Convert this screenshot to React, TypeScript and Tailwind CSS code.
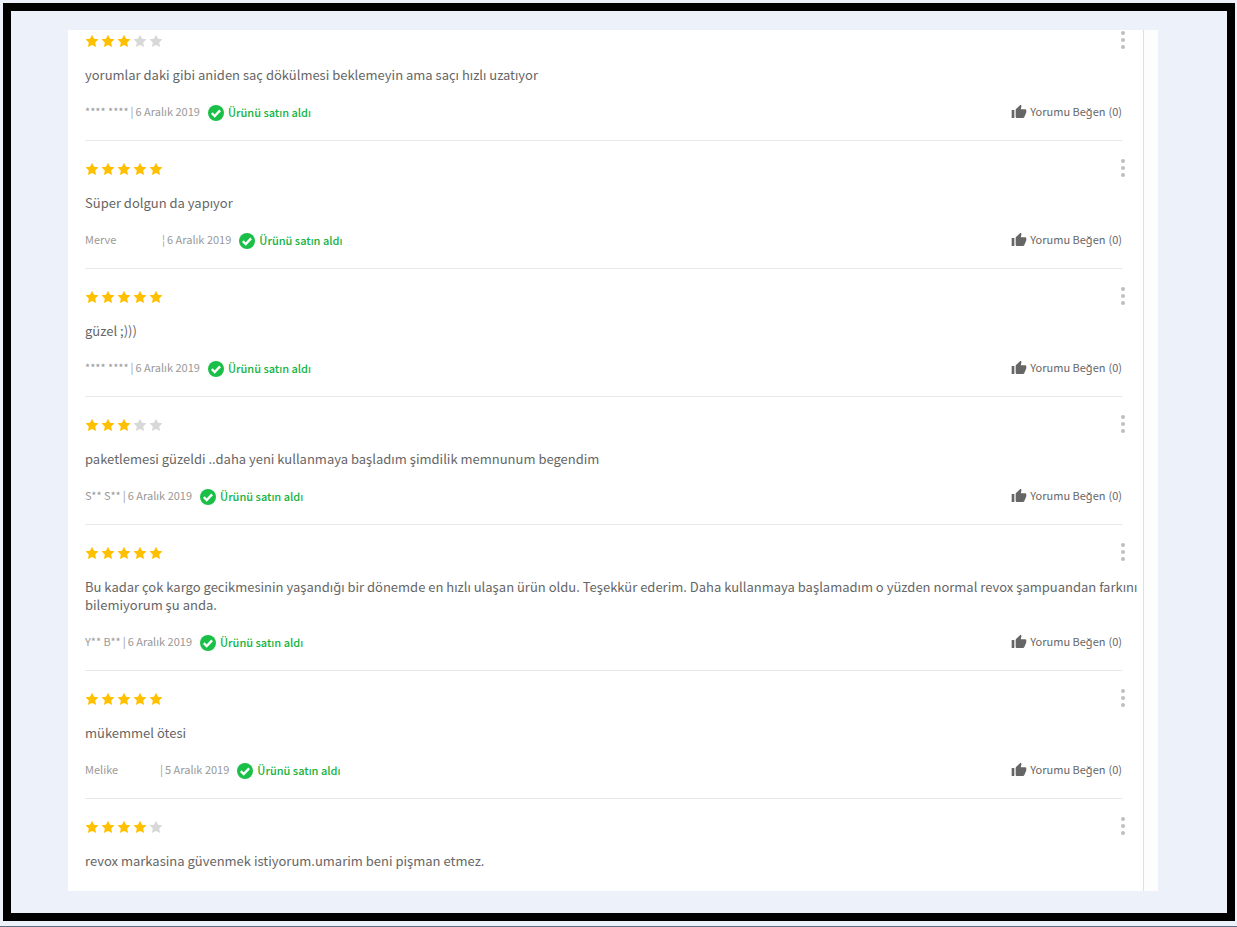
import { MdThumbUp } from "react-icons/md"

type Review = {
  rating: number
  text: string
  author?: string
  authorClass?: string
  divider?: string
  date?: string
}

const reviews: Review[] = [
  {
    rating: 3,
    text: "yorumlar daki gibi aniden saç dökülmesi beklemeyin ama saçı hızlı uzatıyor",
    author: "**** ****",
    date: "6 Aralık 2019",
  },
  {
    rating: 5,
    text: "Süper dolgun da yapıyor",
    author: "Merve",
    authorClass: "w-[75px]",
    divider: "¦",
    date: "6 Aralık 2019",
  },
  { rating: 5, text: "güzel ;)))", author: "**** ****", date: "6 Aralık 2019" },
  {
    rating: 3,
    text: "paketlemesi güzeldi ..daha yeni kullanmaya başladım şimdilik memnunum begendim",
    author: "S** S**",
    date: "6 Aralık 2019",
  },
  {
    rating: 5,
    text: "Bu kadar çok kargo gecikmesinin yaşandığı bir dönemde en hızlı ulaşan ürün oldu. Teşekkür ederim. Daha kullanmaya başlamadım o yüzden normal revox şampuandan farkını bilemiyorum şu anda.",
    author: "Y** B**",
    date: "6 Aralık 2019",
  },
  {
    rating: 5,
    text: "mükemmel ötesi",
    author: "Melike",
    authorClass: "w-[73px]",
    date: "5 Aralık 2019",
  },
  { rating: 4, text: "revox markasina güvenmek istiyorum.umarim beni pişman etmez." },
]

function Stars({ rating }: { rating: number }) {
  return (
    <div className="flex h-4 items-center" role="img" aria-label={`${rating} / 5`}>
      {[1, 2, 3, 4, 5].map((n) => (
        <svg key={n} viewBox="0 0 16 16" className={n <= rating ? "size-4 fill-[#ffc000]" : "size-4 fill-[#d8d8d8]"}>
          <path d="M7 1.7l2 4.1 4.5.5-3.3 3.1.9 4.6L7 11.9 2.9 14l.9-4.6L.5 6.3 5 5.8z" />
        </svg>
      ))}
    </div>
  )
}

function PurchasedBadge() {
  return (
    <span className="mt-[2px] ml-2 flex items-start gap-1 font-medium text-[#14b342]">
      <svg viewBox="0 0 16 16" className="size-4">
        <circle cx="8" cy="8" r="8" fill="#1abf48" />
        <path d="M3.8 8.2l2.9 2.8 5.4-5.6" fill="none" stroke="#fff" strokeWidth="2.3" />
      </svg>
      <span className="leading-[14px]">Ürünü satın aldı</span>
    </span>
  )
}

function ReviewItem({ review }: { review: Review }) {
  return (
    <li className="border-b border-[#e8e8e8] py-5 first:pt-[3px] last:border-b-0 last:pb-[21px]">
      <div className="flex items-center justify-between">
        <Stars rating={review.rating} />
        <button type="button" aria-label="Seçenekler" className="-my-1 -mr-[3px]">
          <svg viewBox="0 0 4 18" className="h-[18px] w-1 -translate-y-px fill-[#bfbfbf]">
            <circle cx="2" cy="2" r="2" />
            <circle cx="2" cy="9" r="2" />
            <circle cx="2" cy="16" r="2" />
          </svg>
        </button>
      </div>
      <p className="mt-[17px] -mr-4 text-[13px] leading-[18px] text-[#666]">{review.text}</p>
      {review.author && (
        <div className="mt-[19px] flex h-[17px] items-start justify-between text-[11px] leading-4">
          <div className="flex items-start text-[#999]">
            <span className={review.authorClass}>{review.author}</span>
            <span className="ml-[2px]">{review.divider ?? "|"}</span>
            <span className="ml-[2px]">{review.date}</span>
            <PurchasedBadge />
          </div>
          <button type="button" className="flex items-start gap-[3px] text-[#666]">
            <MdThumbUp className="mt-px size-4" />
            <span>Yorumu Beğen</span>
            <span>(0)</span>
          </button>
        </div>
      )}
    </li>
  )
}

export default function App() {
  return (
    <div className="border-b border-[#5b6f86] bg-[#edf2fa] pt-[3px] pr-[2px] pb-[5px] pl-[3px] font-['Noto_Sans_CJK_SC','Noto_Sans',sans-serif]">
      <main className="border-8 border-black pt-[19px] pr-[69px] pb-[22px] pl-[57px]">
        <section className="flex bg-white">
          <ul className="grow pr-[21px] pl-[17px]">
            {reviews.map((review, i) => (
              <ReviewItem key={i} review={review} />
            ))}
          </ul>
          <div className="w-[15px] shrink-0 border-l border-[#dcdfe3] bg-[#fdfdfd]" />
        </section>
      </main>
    </div>
  )
}
